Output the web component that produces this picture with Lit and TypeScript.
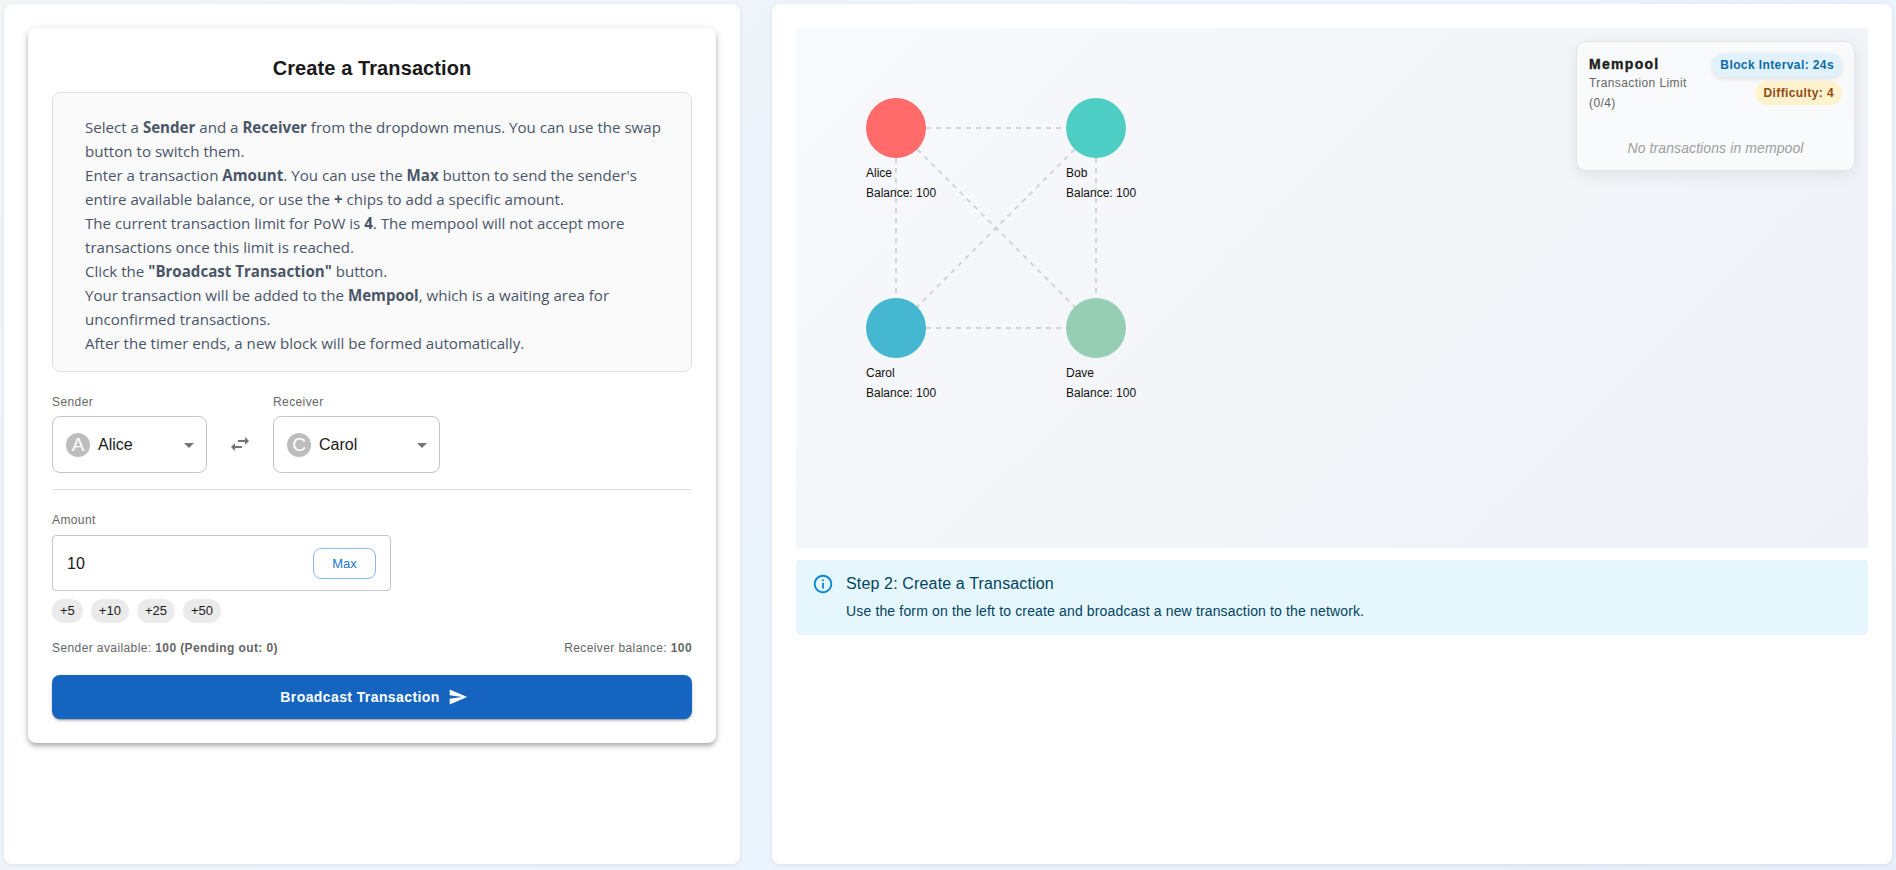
import { LitElement, html, css, svg } from "lit";
import { customElement } from "lit/decorators.js";

const nodes = [
  { n: "Alice", x: 100, y: 100, c: "#ff6b6b" },
  { n: "Bob", x: 300, y: 100, c: "#4ecdc4" },
  { n: "Carol", x: 100, y: 300, c: "#45b7d1" },
  { n: "Dave", x: 300, y: 300, c: "#96ceb4" },
];
const edges = [[0,1],[0,2],[0,3],[1,2],[1,3],[2,3]];

const arrow = html`<svg class="arrow" viewBox="0 0 24 24"><path d="M7 10l5 5 5-5z"/></svg>`;

@customElement("app-root")
export class AppRoot extends LitElement {
  static styles = css`
    :host { display: block; height: 870px; box-sizing: border-box; padding: 4px; background: linear-gradient(135deg, #f3f4f6 0%, #ecf4fe 50%, #e6effb 100%); font-family: "Liberation Sans", Arial, sans-serif; color: #1a1a1a; overflow: hidden; }
    * { box-sizing: border-box; }
    .page { display: flex; gap: 32px; height: 860px; }
    .panel { background: #fff; border-radius: 8px; padding: 24px; box-shadow: 0 1px 4px rgba(0,0,0,.08); }
    .left { width: 736px; flex: none; }
    .right { flex: 1; min-width: 0; display: flex; flex-direction: column; gap: 12px; }
    .card { background: #fff; border-radius: 8px; padding: 24px; box-shadow: 0 2px 4px -1px rgba(0,0,0,.2), 0 4px 5px rgba(0,0,0,.14), 0 1px 10px rgba(0,0,0,.12); }
    h2 { margin: 0 0 12px; height: 28px; line-height: 32px; font-size: 20px; font-weight: 700; text-align: center; color: #1a1a1a; letter-spacing: .1px; }
    .help { margin: 0; padding: 22px 16px 16px 32px; background: #fafafa; border: 1px solid #e0e0e0; border-radius: 8px; font-family: "Open Sans", sans-serif; font-size: 15.1px; line-height: 24px; color: #4a5568; list-style: none; }
    .help li { margin: 0; }
    .help b { font-weight: 700; }
    .parties { display: flex; margin-top: 23px; align-items: flex-start; }
    .field { display: flex; flex-direction: column; }
    .lab { font-size: 12px; line-height: 14px; letter-spacing: .4px; color: #666; margin-bottom: 7px; height: 14px; }
    .sel { height: 57px; border: 1px solid #c4c4c4; border-radius: 8px; display: flex; align-items: center; padding: 0 13px; }
    .sel.a { width: 155px; }
    .sel.b { width: 167px; }
    .av { width: 24px; height: 24px; border-radius: 50%; background: #bdbdbd; color: #fff; display: flex; align-items: center; justify-content: center; font-size: 19px; flex: none; margin-right: 8px; }
    .nm { flex: 1; font-size: 16px; }
    .arrow { width: 24px; height: 24px; fill: #757575; flex: none; margin-right: -8px; }
    .swap { width: 66px; display: flex; justify-content: center; align-items: center; height: 57px; margin-top: 21px; }
    .swap svg { width: 24px; height: 24px; fill: #757575; margin-top: -2px; }
    hr { border: 0; border-top: 1px solid #e0e0e0; margin: 16px 0 23px; }
    .amtlab { margin-bottom: 8px; }
    .amt { width: 339px; height: 56px; border: 1px solid #c4c4c4; border-radius: 4px; display: flex; align-items: center; justify-content: space-between; padding: 0 14px; font-size: 16px; }
    .val { padding-top: 2px; }
    .max { width: 63px; height: 31px; border: 1px solid rgba(25,118,210,.5); border-radius: 8px; color: #1976d2; font-size: 13px; display: flex; align-items: center; justify-content: center; }
    .chips { display: flex; gap: 8px; margin-top: 8px; }
    .chip { height: 24px; padding: 0 8px; border-radius: 12px; background: #ebebeb; font-size: 13px; line-height: 24px; color: #1a1a1a; }
    .info { display: flex; justify-content: space-between; margin-top: 16px; font-size: 12px; letter-spacing: .4px; line-height: 18px; color: #666; }
    .go { margin-top: 18px; height: 44px; padding-left: 4px; border-radius: 8px; background: #1565c0; color: #fff; display: flex; align-items: center; justify-content: center; gap: 8px; font-size: 14px; font-weight: 700; letter-spacing: .4px; box-shadow: 0 3px 1px -2px rgba(0,0,0,.2), 0 2px 2px rgba(0,0,0,.14), 0 1px 5px rgba(0,0,0,.12); }
    .go svg { width: 20px; height: 20px; fill: #fff; }
    .canvas { position: relative; height: 520px; background: linear-gradient(135deg, #f8f9fc 0%, #eef1f6 100%); flex: none; }
    .canvas > svg { position: absolute; inset: 0; width: 100%; height: 100%; }
    .node { position: absolute; width: 90px; font-size: 12px; line-height: 20px; color: #111; }
    .dot { width: 60px; height: 60px; border-radius: 50%; margin-bottom: 5px; }
    .mem { position: absolute; top: 13px; right: 13px; width: 279px; height: 130px; background: #f9fafc; border: 1px solid #e2e4e8; border-radius: 10px; box-shadow: 0 4px 16px rgba(0,0,0,.08); padding: 12px; }
    .mhead { display: flex; justify-content: space-between; align-items: flex-start; }
    .mtitle { font-size: 14px; font-weight: 700; line-height: 20px; color: #1e1e1e; letter-spacing: 1.3px; -webkit-text-stroke: .4px #1e1e1e; }
    .msub { font-size: 12px; line-height: 20px; color: #666; letter-spacing: .4px; width: 120px; margin-top: -1px; }
    .tags { display: flex; flex-direction: column; align-items: flex-end; gap: 4px; margin-top: -1px; }
    .tag { height: 24px; line-height: 24px; border-radius: 12px; padding: 0 8px; font-size: 12px; font-weight: 700; letter-spacing: .4px; }
    .tag.bl { background: #e1f2fd; color: #0e6ba8; box-shadow: 0 2px 5px rgba(0,0,0,.1); }
    .tag.df { background: #fff3cd; color: #924a16; }
    .none { text-align: center; font-style: italic; font-size: 14px; color: #9e9e9e; margin-top: 25px; letter-spacing: .1px; line-height: 20px; }
    .alert { display: flex; background: #e5f6fd; border-radius: 4px; padding: 6px 16px; color: #014361; height: 75px; flex: none; }
    .alert svg { width: 22px; height: 22px; fill: #0288d1; margin: 7px 12px 0 0; flex: none; }
    .at { font-size: 16px; line-height: 24px; margin-top: 6px; letter-spacing: .15px; }
    .ab { font-size: 14px; line-height: 20px; margin-top: 5px; letter-spacing: .15px; }
  `;

  render() {
    return html`<div class="page">
      <div class="panel left">
        <div class="card">
          <h2>Create a Transaction</h2>
          <ul class="help">
            <li>Select a <b>Sender</b> and a <b>Receiver</b> from the dropdown menus. You can use the swap button to switch them.</li>
            <li>Enter a transaction <b>Amount</b>. You can use the <b>Max</b> button to send the sender's entire available balance, or use the <b>+</b> chips to add a specific amount.</li>
            <li>The current transaction limit for PoW is <b>4</b>. The mempool will not accept more transactions once this limit is reached.</li>
            <li>Click the <b>"Broadcast Transaction"</b> button.</li>
            <li>Your transaction will be added to the <b>Mempool</b>, which is a waiting area for unconfirmed transactions.</li>
            <li>After the timer ends, a new block will be formed automatically.</li>
          </ul>
          <div class="parties">
            <div class="field"><div class="lab">Sender</div>
              <div class="sel a"><span class="av">A</span><span class="nm">Alice</span>${arrow}</div></div>
            <div class="swap"><svg viewBox="0 0 24 24"><path d="M6.99 11 3 15l3.99 4v-3H14v-2H6.99v-3zM21 9l-3.99-4v3H10v2h7.01v3L21 9z"/></svg></div>
            <div class="field"><div class="lab">Receiver</div>
              <div class="sel b"><span class="av">C</span><span class="nm">Carol</span>${arrow}</div></div>
          </div>
          <hr />
          <div class="lab amtlab">Amount</div>
          <div class="amt"><span class="val">10</span><span class="max">Max</span></div>
          <div class="chips"><span class="chip">+5</span><span class="chip">+10</span><span class="chip">+25</span><span class="chip">+50</span></div>
          <div class="info"><span>Sender available: <b>100 (Pending out: 0)</b></span><span>Receiver balance: <b>100</b></span></div>
          <div class="go">Broadcast Transaction <svg viewBox="0 0 24 24"><path d="M2.01 21 23 12 2.01 3 2 10l15 2-15 2z"/></svg></div>
        </div>
      </div>
      <div class="panel right">
        <div class="canvas">
          <svg>${edges.map(([a, b]) => svg`<line x1=${nodes[a].x} y1=${nodes[a].y} x2=${nodes[b].x} y2=${nodes[b].y} stroke="#d2d4d8" stroke-width="2" stroke-dasharray="5,5"/>`)}</svg>
          ${nodes.map(n => html`<div class="node" style="left:${n.x - 30}px;top:${n.y - 30}px"><div class="dot" style="background:${n.c}"></div>${n.n}<br />Balance: 100</div>`)}
          <div class="mem">
            <div class="mhead">
              <div><div class="mtitle">Mempool</div><div class="msub">Transaction Limit (0/4)</div></div>
              <div class="tags"><span class="tag bl">Block Interval: 24s</span><span class="tag df">Difficulty: 4</span></div>
            </div>
            <div class="none">No transactions in mempool</div>
          </div>
        </div>
        <div class="alert">
          <svg viewBox="0 0 24 24"><path d="M11 7h2v2h-2zm0 4h2v6h-2zm1-9C6.48 2 2 6.48 2 12s4.48 10 10 10 10-4.48 10-10S17.52 2 12 2zm0 18c-4.41 0-8-3.59-8-8s3.59-8 8-8 8 3.59 8 8-3.59 8-8 8z"/></svg>
          <div><div class="at">Step 2: Create a Transaction</div><div class="ab">Use the form on the left to create and broadcast a new transaction to the network.</div></div>
        </div>
      </div>
    </div>`;
  }
}
